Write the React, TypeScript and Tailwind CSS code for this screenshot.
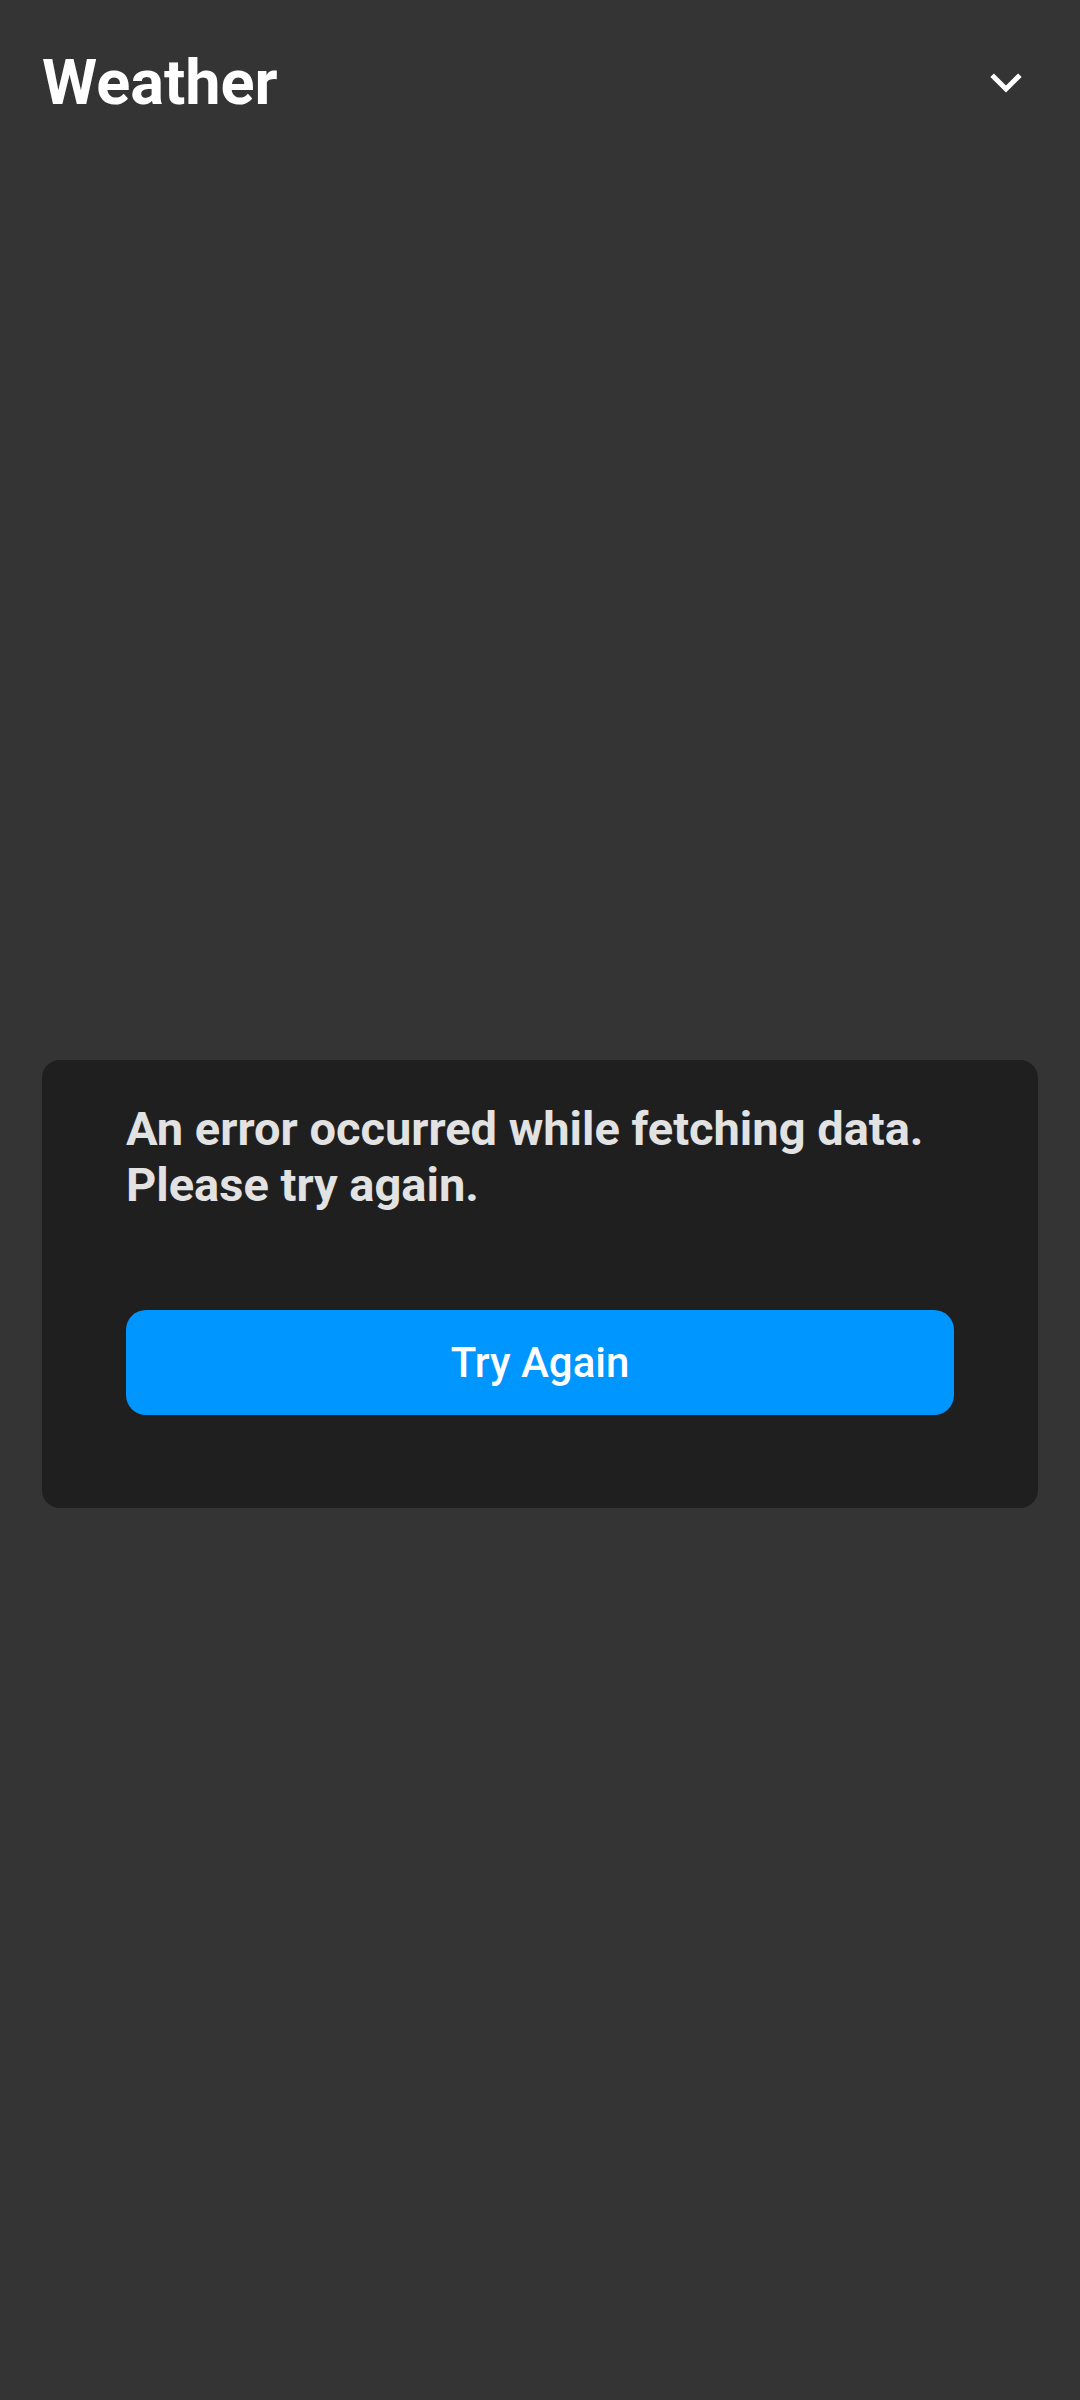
export default function App() {
  return (
    <div className="min-h-[2400px] w-full bg-[#343434] flex flex-col font-['Roboto',sans-serif]">
      {/* Header */}
      <header className="h-[168px] shrink-0 pt-[46px] pl-[42px] pr-[48px]">
        <div className="h-[74px] flex items-center justify-between">
          <h1 className="text-[63px] leading-[74px] font-bold text-white">Weather</h1>
          <button type="button" className="w-[52px] h-[52px] flex items-center justify-center">
            <svg width="52" height="52" viewBox="0 0 24 24" fill="none" stroke="#ffffff" strokeWidth="2.3" strokeLinecap="square" strokeLinejoin="miter">
              <path d="M6.4 9.2 12 14.8 17.6 9.2" />
            </svg>
          </button>
        </div>
      </header>

      {/* Error state */}
      <main className="flex-1 flex items-center px-[42px]">
        <div className="w-full bg-[#1f1f1f] rounded-[18px] pt-[41px] pb-[93px] px-[84px]">
          <p className="text-[47px] leading-[56px] font-bold text-[#e2e2e2]">
            An error occurred while fetching data.
            <br />
            Please try again.
          </p>
          <button
            type="button"
            className="mt-[97px] w-full h-[105px] rounded-[20px] bg-[#0096ff] text-white text-[42px] font-medium"
          >
            Try Again
          </button>
        </div>
      </main>
    </div>
  );
}
